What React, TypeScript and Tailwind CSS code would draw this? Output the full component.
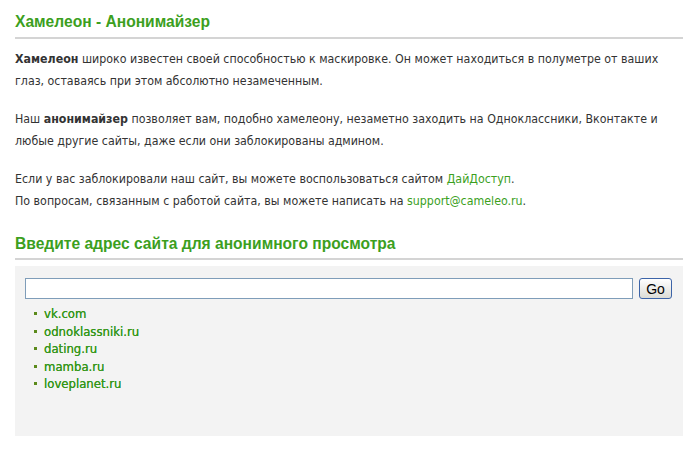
import { useState } from "react";

const sites = ["vk.com", "odnoklassniki.ru", "dating.ru", "mamba.ru", "loveplanet.ru"];

export default function App() {
  const [url, setUrl] = useState("");

  return (
    <div className="w-[699px] h-[450px] bg-white pl-[15px] pr-[16px] pt-[12px] font-['DejaVu_Sans_Condensed','DejaVu_Sans',sans-serif] text-[12.3px] text-[#333]">
      <h1 className="font-['Liberation_Sans',Arial,sans-serif] font-bold text-[15.6px] text-[#3c9f1e] leading-[20px] pb-[5px] border-b-2 border-[#d4d4d4]">
        Хамелеон - Анонимайзер
      </h1>

      <div className="mt-[9px] leading-[22px]">
        <p>
          <b>Хамелеон</b> широко известен своей способностью к маскировке. Он может находиться в полуметре от ваших
          глаз, оставаясь при этом абсолютно незамеченным.
        </p>
        <p className="mt-[16px]">
          Наш <b>анонимайзер</b> позволяет вам, подобно хамелеону, незаметно заходить на Одноклассники, Вконтакте и
          любые другие сайты, даже если они заблокированы админом.
        </p>
        <p className="mt-[16px]">
          Если у вас заблокировали наш сайт, вы можете воспользоваться сайтом{" "}
          <a href="#" className="text-[#3c9f1e]">ДайДоступ</a>.
          <br />
          По вопросам, связанным с работой сайта, вы можете написать на{" "}
          <a href="#" className="text-[#3c9f1e]">support@cameleo.ru</a>.
        </p>
      </div>

      <h2 className="mt-[22px] font-['Liberation_Sans',Arial,sans-serif] font-bold text-[15.6px] text-[#3c9f1e] leading-[20px] pb-[4px] border-b-2 border-[#d4d4d4]">
        Введите адрес сайта для анонимного просмотра
      </h2>

      <div className="mt-[6px] h-[170px] bg-[#f3f3f3] pl-[10px] pr-[11px] pt-[12px]">
        <form className="flex items-center gap-[6px]" onSubmit={(e) => e.preventDefault()}>
          <input
            value={url}
            onChange={(e) => setUrl(e.target.value)}
            autoFocus
            className="w-[608px] h-[21px] bg-white border border-[#7f9db9] px-[2px] text-[13px] outline-none"
          />
          <button className="h-[21px] w-[33px] rounded-[3px] border border-[#3c64a8] bg-gradient-to-b from-white to-[#dcdcd6] text-[14px] text-black font-['Liberation_Sans',Arial,sans-serif] leading-none">
            Go
          </button>
        </form>
        <ul className="mt-[6px] pl-[9px]">
          {sites.map((s) => (
            <li key={s} className="flex items-center h-[17.5px]">
              <span className="w-[3px] h-[3px] bg-[#5a8a1a] mr-[7px]" />
              <a href="#" className="text-[13px] text-[#35961a] [text-shadow:0_0_0.4px_#35961a]">{s}</a>
            </li>
          ))}
        </ul>
      </div>
    </div>
  );
}
